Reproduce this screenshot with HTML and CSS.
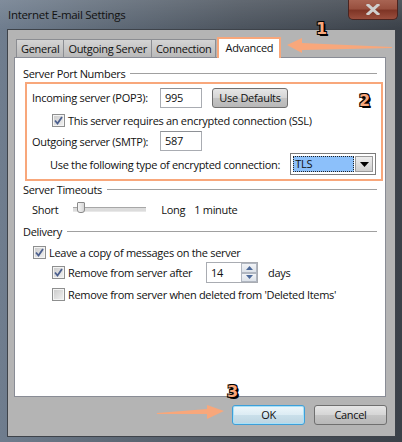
FILE: index.html
```html
<!DOCTYPE html>
<html lang="en">
<head>
    <meta charset="UTF-8">
    <meta name="viewport" content="width=device-width, initial-scale=1.0">
    <title>Internet E-mail Settings</title>
    <link rel="stylesheet" href="styles.css">
</head>
<body>
    <div class="window">
        <div class="titlebar">
            <span class="title">Internet E-mail Settings</span>
            <div class="close">
                <svg width="14" height="11" viewBox="0 0 14 11"><path d="M2 1 L12 10 M12 1 L2 10" stroke="#cfcfcf" stroke-width="3" stroke-linecap="square"/></svg>
            </div>
        </div>

        <div class="client">
            <div class="tabs">
                <div class="tab">General</div>
                <div class="tab">Outgoing Server</div>
                <div class="tab">Connection</div>
                <div class="tab active">Advanced</div>
            </div>

            <div class="panel">
                <div class="group-title">Server Port Numbers</div>

                <div class="highlight">
                    <div class="row row-incoming">
                        <span class="label">Incoming server (POP3):</span>
                        <div class="textbox">995</div>
                        <div class="button defaults">Use Defaults</div>
                    </div>
                    <div class="row row-check indent-1">
                        <span class="checkbox checked"><svg width="9" height="9" viewBox="0 0 9 9"><path d="M1 4.5 L3.5 7.5 L8 1" fill="none" stroke="#4b5f8e" stroke-width="1.8"/></svg></span>
                        This server requires an encrypted connection (SSL)
                    </div>
                    <div class="row row-outgoing">
                        <span class="label">Outgoing server (SMTP):</span>
                        <div class="textbox">587</div>
                    </div>
                    <div class="row row-encrypt">
                        <span class="label-wide">Use the following type of encrypted connection:</span>
                        <div class="combo">
                            <span class="combo-value">TLS</span>
                            <span class="combo-drop"><svg width="9" height="5" viewBox="0 0 9 5"><path d="M0 0 H9 L4.5 5 Z" fill="#000"/></svg></span>
                        </div>
                    </div>
                </div>

                <div class="group-title">Server Timeouts</div>
                <div class="row row-slider">
                    <span>Short</span>
                    <div class="slider">
                        <span class="slider-thumb"></span>
                    </div>
                    <span class="long">Long</span>
                    <span>1 minute</span>
                </div>

                <div class="group-title delivery">Delivery</div>
                <div class="row row-check delivery-1">
                    <span class="checkbox checked"><svg width="9" height="9" viewBox="0 0 9 9"><path d="M1 4.5 L3.5 7.5 L8 1" fill="none" stroke="#4b5f8e" stroke-width="1.8"/></svg></span>
                    Leave a copy of messages on the server
                </div>
                <div class="row row-check row-remove delivery-2">
                    <span class="checkbox checked"><svg width="9" height="9" viewBox="0 0 9 9"><path d="M1 4.5 L3.5 7.5 L8 1" fill="none" stroke="#4b5f8e" stroke-width="1.8"/></svg></span>
                    <span class="remove-label">Remove from server after</span>
                    <div class="spinner">
                        <span class="spinner-value">14</span>
                        <span class="spinner-buttons">
                            <span class="spin"><svg width="7" height="4" viewBox="0 0 7 4"><path d="M0 4 L3.5 0 L7 4 Z" fill="#4d6a9a"/></svg></span>
                            <span class="spin"><svg width="7" height="4" viewBox="0 0 7 4"><path d="M0 0 H7 L3.5 4 Z" fill="#4d6a9a"/></svg></span>
                        </span>
                    </div>
                    <span class="days">days</span>
                </div>
                <div class="row row-check delivery-2 last">
                    <span class="checkbox"></span>
                    Remove from server when deleted from 'Deleted Items'
                </div>
            </div>

            <div class="buttons">
                <div class="button ok">OK</div>
                <div class="button">Cancel</div>
            </div>
        </div>

        <!-- numbered callouts drawn over the dialog -->
        <svg class="arrows" width="402" height="442" viewBox="0 0 402 442">
            <path d="M287 45 L302 38 L302 43 L392 47 L392 48 L302 50 L302 53 Z" fill="#f8a77b"/>
            <path d="M224 411 L207 405 L207 409 L157 413 L157 414 L207 414 L207 419 Z" fill="#f8a77b"/>
        </svg>
        <span class="callout callout-1">1</span>
        <span class="callout callout-2">2</span>
        <span class="callout callout-3">3</span>
    </div>
</body>
</html>
```

FILE: styles.css
```css
body {
    margin: 0;
    font-family: "Open Sans", "Noto Sans", sans-serif;
    font-size: 11px;
    letter-spacing: -0.3px;
    color: #111;
}
.window {
    position: relative;
    width: 402px;
    height: 442px;
    overflow: hidden;
    background: linear-gradient(to right, #6f7d8e 0%, #5d6875 30%, #4c545e 60%, #3b4149 100%);
}
.titlebar {
    height: 29px;
    display: flex;
    justify-content: space-between;
    align-items: flex-start;
    padding: 0 4px 0 8px;
    background: linear-gradient(to bottom, rgba(255,255,255,0.12), rgba(255,255,255,0));
}
.title {
    margin-top: 7px;
    font-size: 11.5px;
    color: #111;
}
.close {
    width: 48px;
    height: 19px;
    display: flex;
    align-items: center;
    justify-content: center;
    border: 1px solid #4a2420;
    border-top: none;
    border-radius: 0 0 5px 5px;
    background: linear-gradient(to bottom, #a86453 0%, #98503f 45%, #7f3526 55%, #9a4e3d 100%);
}
.client {
    box-sizing: border-box;
    width: 389px;
    height: 408px;
    margin-left: 7px;
    padding: 7px 8px 0 6px;
    background: #b4b4b4;
    border: 1px solid #3e434a;
}
.tabs {
    display: flex;
    height: 20px;
    padding-left: 2px;
}
.tab {
    box-sizing: border-box;
    height: 18px;
    margin-top: 2px;
    margin-right: -1px;
    padding: 0 4px;
    line-height: 17px;
    background: linear-gradient(to bottom, #d4d4d4, #b9b9b9);
    border: 1px solid #8b8d92;
    border-bottom: none;
}
.tab.active {
    position: relative;
    z-index: 1;
    height: 21px;
    margin-top: 0;
    margin-left: 2px;
    padding: 0 6px;
    line-height: 17px;
    background: #fff;
    border: 2px solid #f8a77b;
    border-bottom: none;
}
.panel {
    box-sizing: border-box;
    width: 372px;
    height: 340px;
    padding: 7px 8px 0 8px;
    background: #fff;
    border: 1px solid #898c95;
}
.group-title {
    display: flex;
    align-items: center;
    height: 16px;
}
.group-title::after {
    content: "";
    flex: 1;
    height: 1px;
    margin-left: 5px;
    background: #a0a0a0;
}
.highlight {
    margin: 1px -6px 0 2px;
    padding: 3px 5px 4px 5px;
    border: 2px solid #f8a77b;
}
.row {
    display: flex;
    align-items: center;
    white-space: nowrap;
}
.label {
    width: 128px;
}
.label-wide {
    width: 241px;
}
.row-incoming {
    height: 21px;
}
.row-check {
    height: 18px;
}
.indent-1 {
    margin-top: 3px;
    padding-left: 20px;
}
.row-outgoing {
    height: 20px;
    margin-top: 2px;
}
.row-encrypt {
    height: 22px;
    margin-top: 2px;
    padding-left: 18px;
}
.textbox {
    box-sizing: border-box;
    width: 42px;
    height: 20px;
    padding-left: 4px;
    line-height: 18px;
    border: 1px solid #a9acb2;
    border-top-color: #8e9196;
    background: #fff;
}
.button {
    box-sizing: border-box;
    height: 20px;
    line-height: 18px;
    text-align: center;
    border: 1px solid #6f6f6f;
    border-radius: 3px;
    background: linear-gradient(to bottom, #e6e6e6 0%, #d6d6d6 48%, #c4c4c4 52%, #b8b8b8 100%);
}
.defaults {
    width: 76px;
    margin-left: 10px;
}
.checkbox {
    box-sizing: border-box;
    width: 13px;
    height: 13px;
    margin-right: 3px;
    display: inline-flex;
    align-items: center;
    justify-content: center;
    border: 1px solid #8e8f8f;
    background: linear-gradient(135deg, #c9c9c9, #f2f2f2);
    box-shadow: inset 0 0 0 1px #f4f4f4;
}
.combo {
    box-sizing: border-box;
    display: flex;
    width: 86px;
    height: 22px;
    padding: 2px;
    border: 1px solid #7b7b7b;
    background: #fff;
}
.combo-value {
    flex: 1;
    line-height: 14px;
    padding-left: 1px;
    background: #8cc0fa;
    border: 1px dotted #222;
}
.combo-drop {
    width: 16px;
    display: flex;
    align-items: center;
    justify-content: center;
    margin-left: 1px;
    border: 1px solid #9a9a9a;
    background: linear-gradient(to bottom, #ededed, #cfcfcf);
}
.row-slider {
    height: 18px;
    margin-top: 3px;
    padding-left: 9px;
}
.slider {
    position: relative;
    width: 73px;
    height: 3px;
    margin: 0 15px 0 15px;
    border-top: 1px solid #a7a7a7;
    border-bottom: 1px solid #e8e8e8;
    background: #dcdcdc;
}
.slider-thumb {
    position: absolute;
    left: 4px;
    top: -6px;
    width: 6px;
    height: 9px;
    border: 1px solid #8a8a8a;
    border-radius: 1px 1px 3px 3px;
    background: linear-gradient(to right, #f6f6f6, #d6d6d6);
}
.long {
    margin-right: 9px;
}
.delivery {
    margin-top: 5px;
}
.delivery-1 {
    margin-top: 4px;
    padding-left: 10px;
}
.delivery-2 {
    padding-left: 29px;
}
.row-remove {
    height: 21px;
    margin-top: 1px;
}
.remove-label {
    width: 138px;
}
.last {
    margin-top: 2px;
}
.spinner {
    box-sizing: border-box;
    display: flex;
    width: 52px;
    height: 21px;
    border: 1px solid #a9acb2;
    background: #fff;
}
.spinner-value {
    flex: 1;
    padding-left: 4px;
    line-height: 20px;
}
.spinner-buttons {
    display: flex;
    flex-direction: column;
    width: 16px;
}
.spin {
    flex: 1;
    display: flex;
    align-items: center;
    justify-content: center;
    border: 1px solid #b0b6c0;
    background: linear-gradient(to bottom, #f2f4f7, #dde2e9);
}
.days {
    margin-left: 10px;
}
.buttons {
    display: flex;
    justify-content: flex-end;
    gap: 9px;
    margin-top: 8px;
}
.buttons .button {
    width: 73px;
}
.button.ok {
    border-color: #3d9fd9;
    box-shadow: inset 0 0 0 1px #a9e0f6;
    background: linear-gradient(to bottom, #eef7fb 0%, #dcecf4 48%, #c9dfea 52%, #bcd5e2 100%);
}
.arrows {
    position: absolute;
    left: 0;
    top: 0;
    pointer-events: none;
}
.callout {
    position: absolute;
    font-family: "DejaVu Sans", sans-serif;
    font-weight: bold;
    font-size: 16px;
    line-height: 16px;
    letter-spacing: 0;
    color: #f8a77b;
    text-shadow: 1px 1px 0 #000, -1px 1px 0 #000, 1px -1px 0 #000, -1px -1px 0 #000, 2px 2px 0 #000;
}
.callout-1 {
    left: 316px;
    top: 21px;
}
.callout-2 {
    left: 359px;
    top: 93px;
}
.callout-3 {
    left: 227px;
    top: 384px;
}
```
